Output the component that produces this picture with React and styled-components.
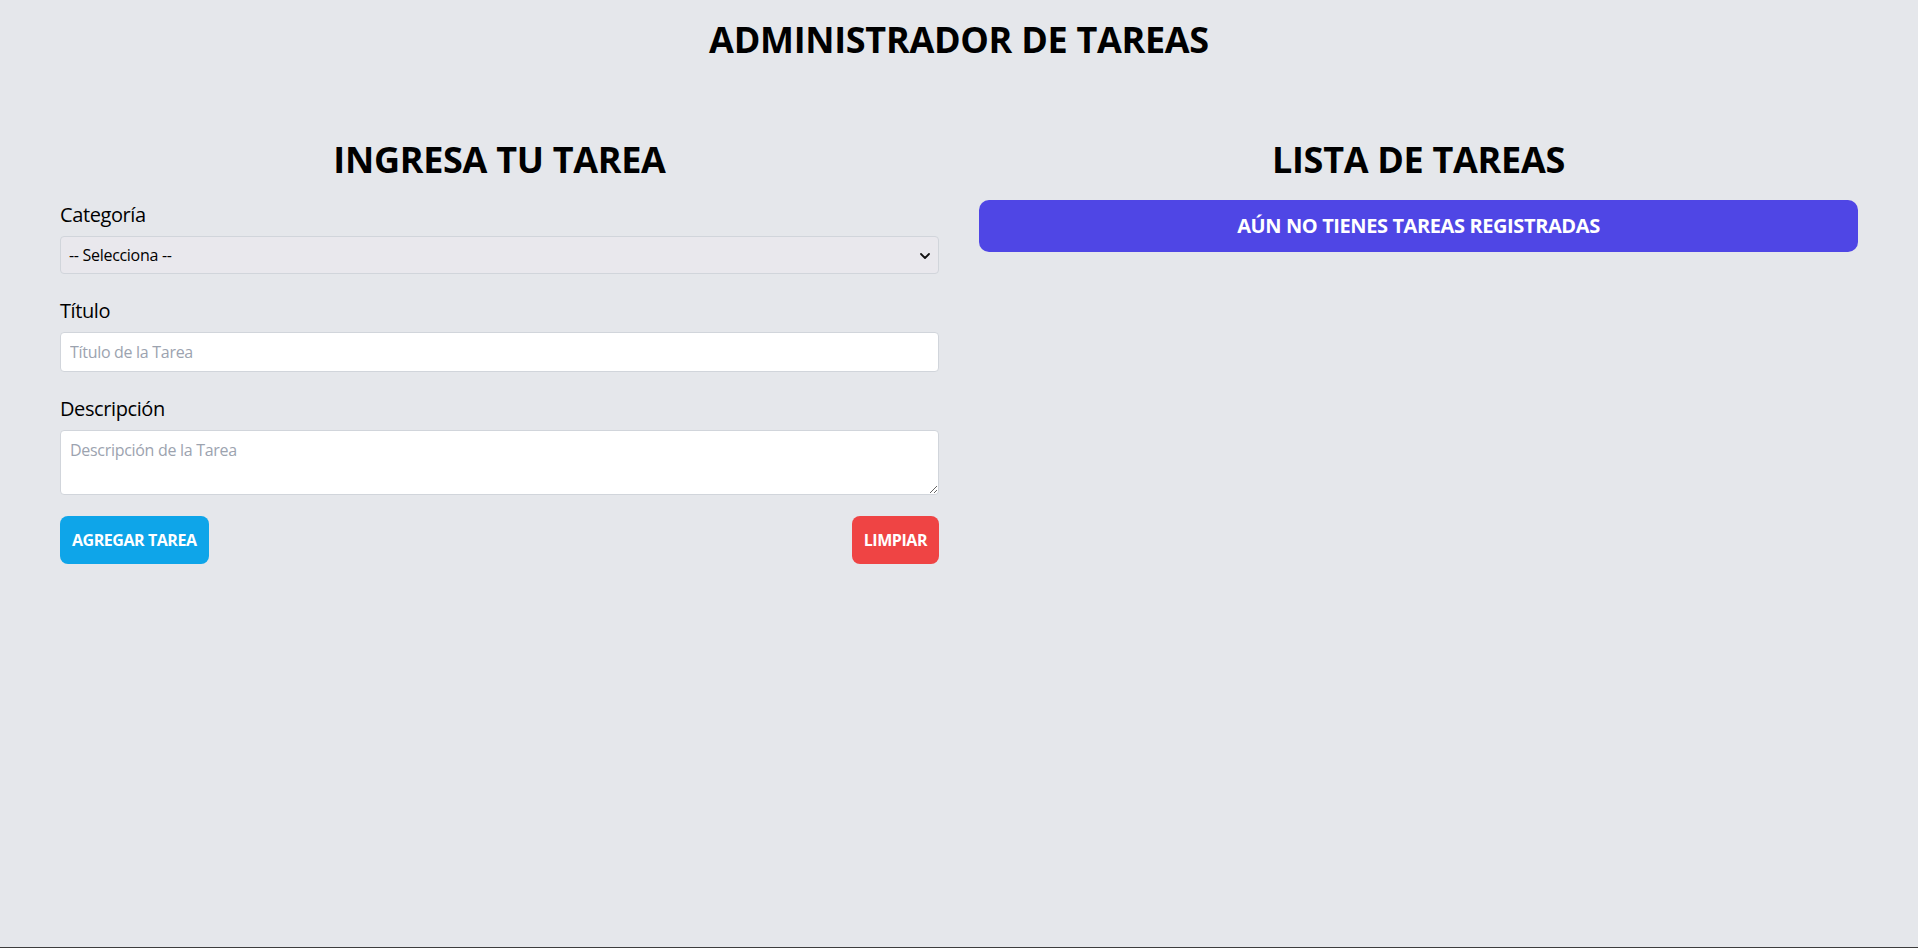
import React from "react";
import styled, { createGlobalStyle } from "styled-components";

const GlobalStyle = createGlobalStyle`
  *, *::before, *::after { box-sizing: border-box; }
  html, body { margin: 0; padding: 0; }
  body {
    background: #e5e7eb;
    font-family: "Open Sans", "Noto Sans", sans-serif;
    color: #000;
  }
`;

const Page = styled.div`
  min-height: 100vh;
  padding-top: 20px;
  border-bottom: 1px solid #3d3d3d;
`;

const PageTitle = styled.h1`
  margin: 0;
  text-align: center;
  font-size: 36px;
  line-height: 40px;
  font-weight: 700;
  letter-spacing: -0.3px;
`;

const Main = styled.main`
  display: flex;
  margin-top: 80px;
  padding: 0 40px;
`;

const Column = styled.section`
  flex: 1 1 0;
  min-width: 0;
  padding: 0 20px;
`;

const SectionTitle = styled.h2`
  margin: 0 0 20px;
  text-align: center;
  font-size: 36px;
  line-height: 40px;
  font-weight: 700;
  letter-spacing: -0.3px;
`;

const Form = styled.form`
  display: flex;
  flex-direction: column;
`;

const Field = styled.div`
  display: flex;
  flex-direction: column;
  gap: 8px;
  margin-bottom: ${(p) => (p.$last ? "21px" : "22px")};
`;

const Label = styled.label`
  font-size: 20px;
  line-height: 28px;
  letter-spacing: -0.4px;
  padding-top: 1px;
  margin-bottom: -1px;
`;

const SelectWrap = styled.div`
  position: relative;
`;

const Select = styled.select`
  appearance: none;
  width: 100%;
  height: 38px;
  padding: 0 8px;
  font-family: inherit;
  font-size: 16px;
  letter-spacing: -0.3px;
  color: #000;
  background: #e9e8ed;
  border: 1px solid #d1d5db;
  border-radius: 4px;
  outline: none;
`;

const Chevron = styled.svg`
  position: absolute;
  right: 9px;
  top: 50%;
  width: 10px;
  height: 6px;
  margin-top: -2px;
  pointer-events: none;
`;

const Input = styled.input`
  width: 100%;
  height: 40px;
  padding: 7px 9px;
  font-family: inherit;
  font-size: 16px;
  line-height: 24px;
  letter-spacing: -0.3px;
  background: #fff;
  border: 1px solid #d1d5db;
  border-radius: 4px;
  outline: none;
  &::placeholder { color: #9ca3af; }
`;

const TextArea = styled.textarea`
  display: block;
  width: 100%;
  height: 65px;
  padding: 7px 9px;
  font-family: inherit;
  font-size: 16px;
  line-height: 24px;
  letter-spacing: -0.3px;
  background: #fff;
  border: 1px solid #d1d5db;
  border-radius: 4px;
  outline: none;
  &::placeholder { color: #9ca3af; }
`;

const Actions = styled.div`
  display: flex;
  justify-content: space-between;
  align-items: center;
`;

const Button = styled.button`
  height: 48px;
  padding: 0 12px;
  border: none;
  border-radius: 8px;
  background: ${(p) => p.$bg};
  color: #fff;
  font-family: inherit;
  font-size: 16px;
  font-weight: 700;
  line-height: 24px;
  letter-spacing: -0.45px;
  cursor: pointer;
`;

const EmptyNotice = styled.div`
  height: 52px;
  display: flex;
  align-items: center;
  justify-content: center;
  background: #4f46e5;
  color: #fff;
  border-radius: 10px;
  font-size: 20px;
  line-height: 28px;
  font-weight: 700;
  letter-spacing: -0.4px;
`;

export default function App() {
  return (
    <Page>
      <GlobalStyle />
      <PageTitle>ADMINISTRADOR DE TAREAS</PageTitle>
      <Main>
        <Column>
          <SectionTitle>INGRESA TU TAREA</SectionTitle>
          <Form onSubmit={(e) => e.preventDefault()}>
            <Field>
              <Label htmlFor="categoria">Categoría</Label>
              <SelectWrap>
                <Select id="categoria" defaultValue="">
                  <option value="">-- Selecciona --</option>
                  <option value="trabajo">Trabajo</option>
                  <option value="personal">Personal</option>
                </Select>
                <Chevron viewBox="0 0 10 6" fill="none">
                  <polyline points="1,1 5,5 9,1" stroke="#111" strokeWidth="1.8" strokeLinecap="round" strokeLinejoin="round" />
                </Chevron>
              </SelectWrap>
            </Field>
            <Field>
              <Label htmlFor="titulo">Título</Label>
              <Input id="titulo" type="text" placeholder="Título de la Tarea" />
            </Field>
            <Field $last>
              <Label htmlFor="descripcion">Descripción</Label>
              <TextArea id="descripcion" placeholder="Descripción de la Tarea" />
            </Field>
            <Actions>
              <Button type="submit" $bg="#0ea5e9">AGREGAR TAREA</Button>
              <Button type="button" $bg="#ef4444">LIMPIAR</Button>
            </Actions>
          </Form>
        </Column>
        <Column>
          <SectionTitle>LISTA DE TAREAS</SectionTitle>
          <EmptyNotice>AÚN NO TIENES TAREAS REGISTRADAS</EmptyNotice>
        </Column>
      </Main>
    </Page>
  );
}
